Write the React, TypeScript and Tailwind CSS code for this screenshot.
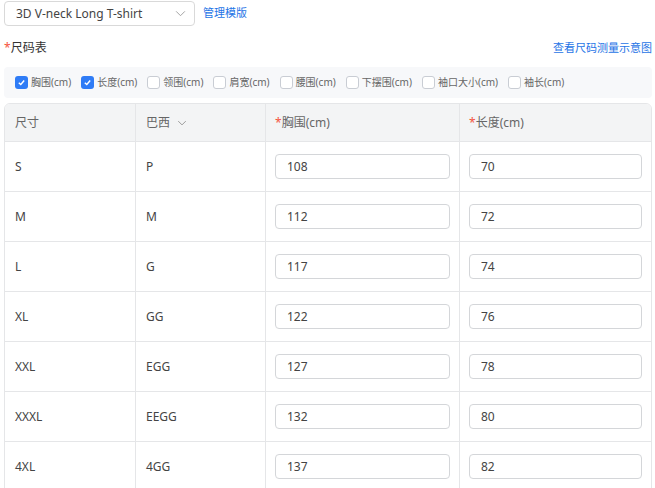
import React from "react";

type Row = { size: string; br: string; chest: string; length: string };

const rows: Row[] = [
  { size: "S", br: "P", chest: "108", length: "70" },
  { size: "M", br: "M", chest: "112", length: "72" },
  { size: "L", br: "G", chest: "117", length: "74" },
  { size: "XL", br: "GG", chest: "122", length: "76" },
  { size: "XXL", br: "EGG", chest: "127", length: "78" },
  { size: "XXXL", br: "EEGG", chest: "132", length: "80" },
  { size: "4XL", br: "4GG", chest: "137", length: "82" },
];

const options = [
  { label: "胸围(cm)", checked: true },
  { label: "长度(cm)", checked: true },
  { label: "领围(cm)", checked: false },
  { label: "肩宽(cm)", checked: false },
  { label: "腰围(cm)", checked: false },
  { label: "下摆围(cm)", checked: false },
  { label: "袖口大小(cm)", checked: false },
  { label: "袖长(cm)", checked: false },
];

const Chevron = ({ className }: { className?: string }) => (
  <svg className={className} viewBox="0 0 12 8" fill="none" stroke="currentColor" strokeWidth="1.1">
    <path d="M1 1.5 L6 6.5 L11 1.5" />
  </svg>
);

const Check = ({ checked }: { checked: boolean }) =>
  checked ? (
    <span className="flex h-[13px] w-[13px] shrink-0 items-center justify-center rounded-[3px] bg-[#2f7cf6]">
      <svg viewBox="0 0 10 10" className="h-[9px] w-[9px]" fill="none" stroke="white" strokeWidth="1.6">
        <path d="M2 5.2 L4.2 7.2 L8 2.8" />
      </svg>
    </span>
  ) : (
    <span className="h-[13px] w-[13px] shrink-0 rounded-[3px] border border-[#c9cdd4] bg-white" />
  );

const Star = () => <span className="text-[#f5533d]">*</span>;

export default function App() {
  return (
    <div
      className="w-[655px] bg-white pl-[4px] pr-[3px] pt-[1px] text-[12px] text-[#333]"
      style={{ fontFamily: '"Noto Sans", "Noto Sans CJK SC", sans-serif' }}
    >
      {/* template select */}
      <div className="flex items-center gap-[8px]">
        <div className="flex h-[25px] w-[191px] items-center justify-between rounded-[4px] border border-[#d9d9d9] pl-[11px] pr-[8px]">
          <span className="text-[12px] text-[#444]">3D V-neck Long T-shirt</span>
          <Chevron className="h-[7px] w-[11px] text-[#a0a0a0]" />
        </div>
        <span className="text-[11px] text-[#1e74e6]">管理模版</span>
      </div>

      {/* title row */}
      <div className="mt-[12px] flex h-[20px] items-center justify-between">
        <span className="text-[12px] text-[#333]">
          <Star />
          尺码表
        </span>
        <span className="text-[11px] text-[#1e74e6]">查看尺码测量示意图</span>
      </div>

      {/* measure options */}
      <div className="mt-[9px] flex h-[31px] items-center gap-[10px] rounded-[4px] bg-[#f7f8fa] pl-[11px]">
        {options.map((o) => (
          <label key={o.label} className="flex items-center gap-[3px] text-[10px] text-[#666]">
            <Check checked={o.checked} />
            <span>{o.label}</span>
          </label>
        ))}
      </div>

      {/* table */}
      <div className="mt-[5px] overflow-hidden rounded-t-[6px] border border-[#e5e6e8]">
        <div className="grid h-[37px] grid-cols-[130px_130px_194px_1fr] bg-[#f3f4f5] text-[12px] text-[#666]">
          <div className="flex items-center pl-[10px]">尺寸</div>
          <div className="flex items-center gap-[7px] border-l border-[#e5e6e8] pl-[10px]">
            巴西
            <Chevron className="h-[6px] w-[10px] text-[#888]" />
          </div>
          <div className="flex items-center border-l border-[#e5e6e8] pl-[9px]">
            <Star />
            胸围(cm)
          </div>
          <div className="flex items-center border-l border-[#e5e6e8] pl-[9px]">
            <Star />
            长度(cm)
          </div>
        </div>
        {rows.map((r) => (
          <div
            key={r.size}
            className="grid h-[50px] grid-cols-[130px_130px_194px_1fr] border-t border-[#e5e6e8] text-[12px] text-[#444]"
          >
            <div className="flex items-center pl-[10px]">{r.size}</div>
            <div className="flex items-center border-l border-[#e5e6e8] pl-[10px]">{r.br}</div>
            <div className="flex items-center border-l border-[#e5e6e8] px-[9px]">
              <div className="flex h-[25px] w-full items-center rounded-[4px] border border-[#d4d6d9] pl-[11px]">
                {r.chest}
              </div>
            </div>
            <div className="flex items-center border-l border-[#e5e6e8] pl-[9px] pr-[9px]">
              <div className="flex h-[25px] w-full items-center rounded-[4px] border border-[#d4d6d9] pl-[11px]">
                {r.length}
              </div>
            </div>
          </div>
        ))}
      </div>
    </div>
  );
}
